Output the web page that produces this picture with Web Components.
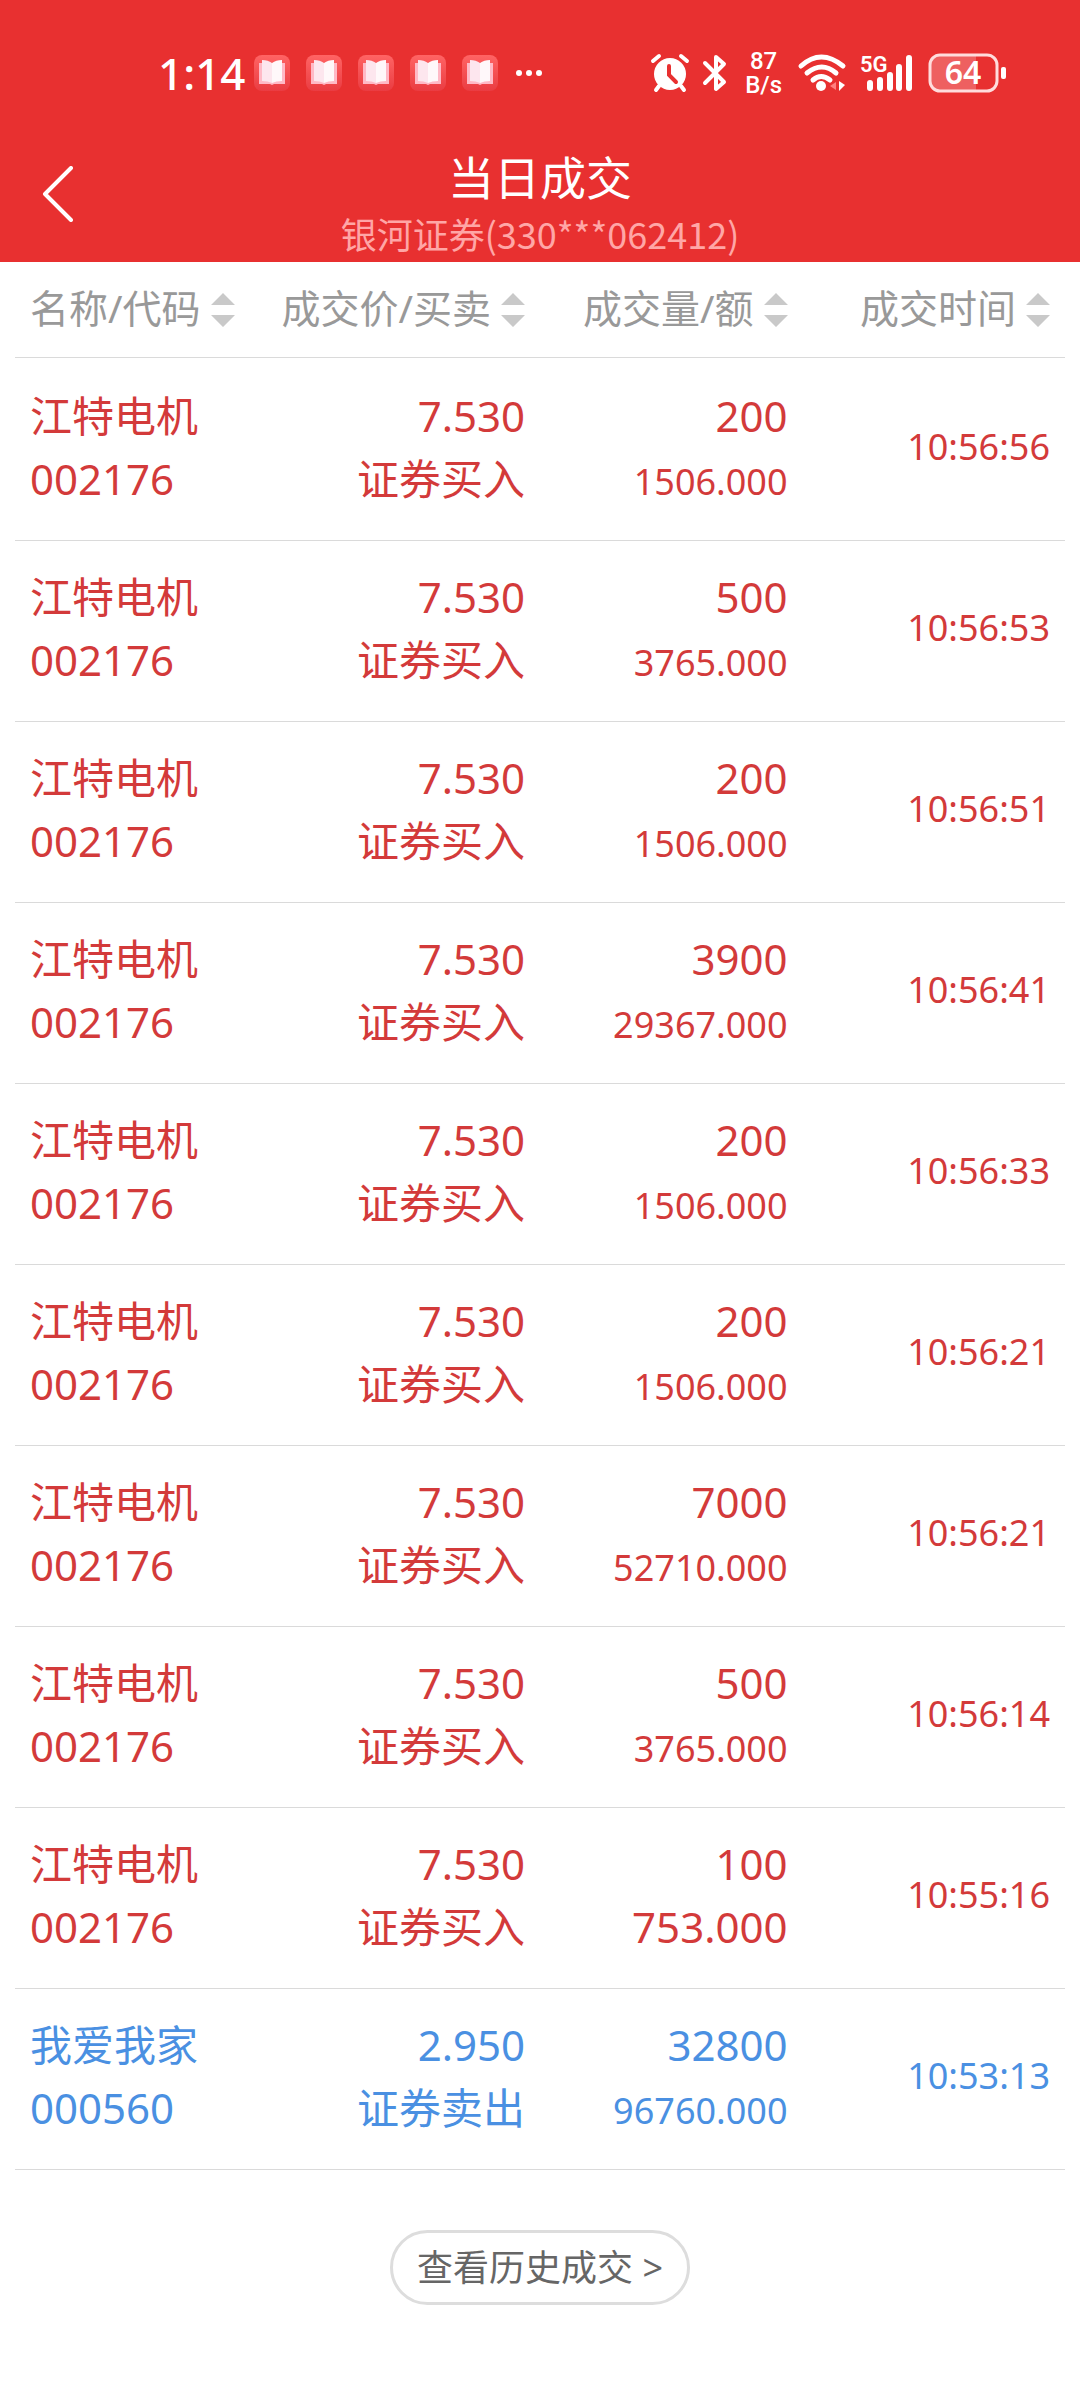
<!DOCTYPE html>
<html lang="zh-CN">
<head>
<meta charset="utf-8">
<meta name="viewport" content="width=device-width, initial-scale=1">
<title>当日成交</title>
<style>
    body {
        margin: 0;
        background: #fff;
        font-family: "Noto Sans", "Noto Sans CJK SC", sans-serif;
    }
</style>
</head>
<body>

<status-bar>1:14</status-bar>
<page-header>
    当日成交
    <span slot="account">银河证券(330***062412)</span>
</page-header>
<main>
    <trade-table></trade-table>
    <more-button>查看历史成交 &gt;</more-button>
</main>

<script>
class StatusBar extends HTMLElement {
    connectedCallback() {
        const book = `
<svg class="book" width="36" height="36" viewBox="0 0 36 36">
    <path d="M5 8h26v21H20l-2 1-2-1H5z" fill="#ffb9c6"/>
    <path d="M8 5q6 0 10 3v20q-4-2-10-2z" fill="#fde6ee"/>
    <path d="M28 5q-6 0-10 3v20q4-2 10-2z" fill="#fff8fa"/>
</svg>`;

        let html = `
<style>
    :host {
        display: flex;
        justify-content: space-between;
        align-items: center;
        height: 146px;
        box-sizing: border-box;
        padding: 0 74px 0 158px;
        background: #e83030;
        color: #fff;
    }

    .side, .notes {
        display: flex;
        align-items: center;
    }

    .clock {
        font-size: 44px;
        font-weight: 500;
        line-height: 50px;
        margin-right: 9px;
    }

    .notes {
        gap: 16px;
    }

    .book {
        border-radius: 8px;
        background: linear-gradient(#ff6464, #ea3c42);
    }

    .dots {
        margin-left: 1px;
    }

    .side.right {
        gap: 14px;
    }

    .speed {
        margin: 0 2px 0 4px;
        font-family: Roboto, sans-serif;
        font-size: 24px;
        font-weight: 500;
        line-height: 24px;
        text-align: center;
    }

    svg {
        display: block;
        flex: none;
        overflow: visible;
    }
</style>
<div class="side">
    <span class="clock"><slot></slot></span>
    <div class="notes">${book.repeat(5)}
        <svg class="dots" width="28" height="8" viewBox="0 0 28 8" fill="#fff">
            <circle cx="4" cy="4" r="3"/><circle cx="14" cy="4" r="3"/><circle cx="24" cy="4" r="3"/>
        </svg>
    </div>
</div>
<div class="side right">
    <svg width="38" height="38" viewBox="0 0 38 38" fill="none" stroke="#fff" stroke-linecap="round">
        <circle cx="19" cy="20" r="16" fill="#fff" stroke="none"/>
        <path d="M2 7l6-5M36 7l-6-5M8 32l-3 4M30 32l3 4" stroke-width="4"/>
        <path d="M18 12v9l7 7" stroke="#e83030" stroke-width="4"/>
    </svg>
    <svg width="24" height="38" viewBox="0 0 24 38" fill="none" stroke="#fff" stroke-width="4" stroke-linecap="round" stroke-linejoin="round">
        <path d="M2 9l19 19-8 7V3l8 7L2 29"/>
    </svg>
    <div class="speed">87<br>B/s</div>
    <svg width="48" height="38" viewBox="0 0 48 38" fill="none" stroke="#fff" stroke-width="5" stroke-linecap="round">
        <path d="M3 12q20-18 42 0M9 19q15-12 29 0M15 26q8-7 17 0"/>
        <circle cx="23" cy="32" r="5" fill="#fff" stroke="none"/>
        <path d="M38 28v8l-6-4z" fill="#ff8080" stroke="none"/>
        <path d="M41 27v10l6-6z" fill="#fff" stroke="none"/>
    </svg>
    <svg width="54" height="38" viewBox="0 0 54 38" fill="none" stroke="#fff" stroke-width="6" stroke-linecap="round">
        <text x="0" y="18" font-family="Roboto, sans-serif" font-size="22" font-weight="600" fill="#fff" stroke="none">5G</text>
        <path d="M10 29v5M20 26v8M30 21v13M39 13v21M49 4v30"/>
    </svg>
    <svg width="78" height="40" viewBox="0 0 78 40">
        <path d="M12 3h36v34H12a9 9 0 0 1-9-9V12a9 9 0 0 1 9-9z" fill="#ee6060"/>
        <rect x="2" y="2" width="67" height="36" rx="10" fill="none" stroke="#ffdcdc" stroke-width="3"/>
        <rect x="73" y="14" width="5" height="12" rx="2" fill="#fff"/>
        <text x="35" y="31" text-anchor="middle" font-family="Noto Sans, sans-serif" font-size="32" font-weight="600" fill="#fff">64</text>
    </svg>
</div>
        `;

        this.attachShadow({mode: 'open'}).innerHTML = html;
    }
}

class PageHeader extends HTMLElement {
    connectedCallback() {
        let html = `
<style>
    :host {
        display: grid;
        grid-template-columns: 116px 1fr 116px;
        height: 116px;
        background: #e83030;
        color: #fff;
        text-align: center;
    }

    button {
        display: flex;
        align-items: center;
        height: 96px;
        padding: 0 0 0 42px;
        border: 0;
        background: none;
    }

    h1 {
        margin: 0;
        font-size: 46px;
        font-weight: normal;
        line-height: 62px;
    }

    .account {
        font-family: "Noto Sans CJK SC", sans-serif;
        font-size: 36px;
        line-height: 50px;
        color: #ffa6a6;
    }
</style>
<button type="button" aria-label="返回">
    <svg width="32" height="56" viewBox="0 0 32 56" fill="none" stroke="#fff" stroke-width="4" stroke-linecap="round" stroke-linejoin="round">
        <path d="M29 2L3 28l26 26"/>
    </svg>
</button>
<div>
    <h1><slot></slot></h1>
    <div class="account"><slot name="account"></slot></div>
</div>
        `;

        this.attachShadow({mode: 'open'}).innerHTML = html;
    }
}

const columns = ['名称/代码', '成交价/买卖', '成交量/额', '成交时间'];

// name, code, price, side, volume, amount, time
const trades = [
    ['江特电机', '002176', '7.530', '证券买入', '200', '1506.000', '10:56:56'],
    ['江特电机', '002176', '7.530', '证券买入', '500', '3765.000', '10:56:53'],
    ['江特电机', '002176', '7.530', '证券买入', '200', '1506.000', '10:56:51'],
    ['江特电机', '002176', '7.530', '证券买入', '3900', '29367.000', '10:56:41'],
    ['江特电机', '002176', '7.530', '证券买入', '200', '1506.000', '10:56:33'],
    ['江特电机', '002176', '7.530', '证券买入', '200', '1506.000', '10:56:21'],
    ['江特电机', '002176', '7.530', '证券买入', '7000', '52710.000', '10:56:21'],
    ['江特电机', '002176', '7.530', '证券买入', '500', '3765.000', '10:56:14'],
    ['江特电机', '002176', '7.530', '证券买入', '100', '753.000', '10:55:16'],
    ['我爱我家', '000560', '2.950', '证券卖出', '32800', '96760.000', '10:53:13']
];

class SortButton extends HTMLElement {
    connectedCallback() {
        let html = `
<style>
    :host {
        display: inline-block;
        vertical-align: top;
    }

    button {
        display: flex;
        align-items: center;
        gap: 10px;
        height: 95px;
        padding: 0;
        border: 0;
        background: none;
        color: #999;
        font: inherit;
        font-size: 39px;
        line-height: 60px;
        white-space: nowrap;
    }

    span {
        padding-bottom: 4px;
    }
</style>
<button type="button">
    <span><slot></slot></span>
    <svg width="24" height="34" viewBox="0 0 24 34" fill="#c9c9c9">
        <path d="M12 0l12 12H0zM12 34l12-12H0z"/>
    </svg>
</button>
        `;

        this.attachShadow({mode: 'open'}).innerHTML = html;
    }
}

class TradeTable extends HTMLElement {
    row([name, code, price, side, volume, amount, time]) {
        const type = side === '证券卖出' ? 'sell' : 'buy';
        // long amounts drop to the smaller size
        const size = amount.length > 7 ? 'small' : '';
        return `
<tr class="${type}">
    <td>${name}<br>${code}</td>
    <td>${price}<br>${side}</td>
    <td>${volume}<br><span class="${size}">${amount}</span></td>
    <td class="small">${time}</td>
</tr>`;
    }

    connectedCallback() {
        let html = `
<style>
    :host {
        display: block;
        padding: 0 15px;
    }

    table {
        width: 100%;
        table-layout: fixed;
        border-collapse: separate;
        border-spacing: 0;
    }

    th, td {
        padding: 0 15px 0 0;
        border-bottom: 1px solid #dadada;
        text-align: right;
        font-weight: normal;
        white-space: nowrap;
    }

    th:first-child, td:first-child {
        padding-left: 15px;
        padding-right: 0;
        text-align: left;
    }

    td {
        padding-top: 24px;
        padding-bottom: 30px;
        font-size: 42px;
        line-height: 63px;
    }

    tbody tr:first-child td {
        padding-top: 26px;
    }

    .small {
        font-size: 36px;
        line-height: 40px;
    }

    .buy {
        color: #d33a3a;
    }

    .sell {
        color: #4a90e2;
    }
</style>
<table>
    <thead>
        <tr>${columns.map(c => `<th scope="col"><sort-button>${c}</sort-button></th>`).join('')}</tr>
    </thead>
    <tbody>${trades.map(this.row).join('')}</tbody>
</table>
        `;

        this.attachShadow({mode: 'open'}).innerHTML = html;
    }
}

class MoreButton extends HTMLElement {
    connectedCallback() {
        let html = `
<style>
    :host {
        display: flex;
        justify-content: center;
        padding: 60px 0 95px;
    }

    button {
        padding: 0 24px;
        height: 75px;
        border: 3px solid #ddd;
        border-radius: 38px;
        background: #fff;
        color: #666;
        font: inherit;
        font-size: 36px;
        line-height: 60px;
    }
</style>
<button type="button"><slot></slot></button>
        `;

        this.attachShadow({mode: 'open'}).innerHTML = html;
    }
}

customElements.define('status-bar', StatusBar);
customElements.define('page-header', PageHeader);
customElements.define('sort-button', SortButton);
customElements.define('trade-table', TradeTable);
customElements.define('more-button', MoreButton);
</script>
</body>
</html>
